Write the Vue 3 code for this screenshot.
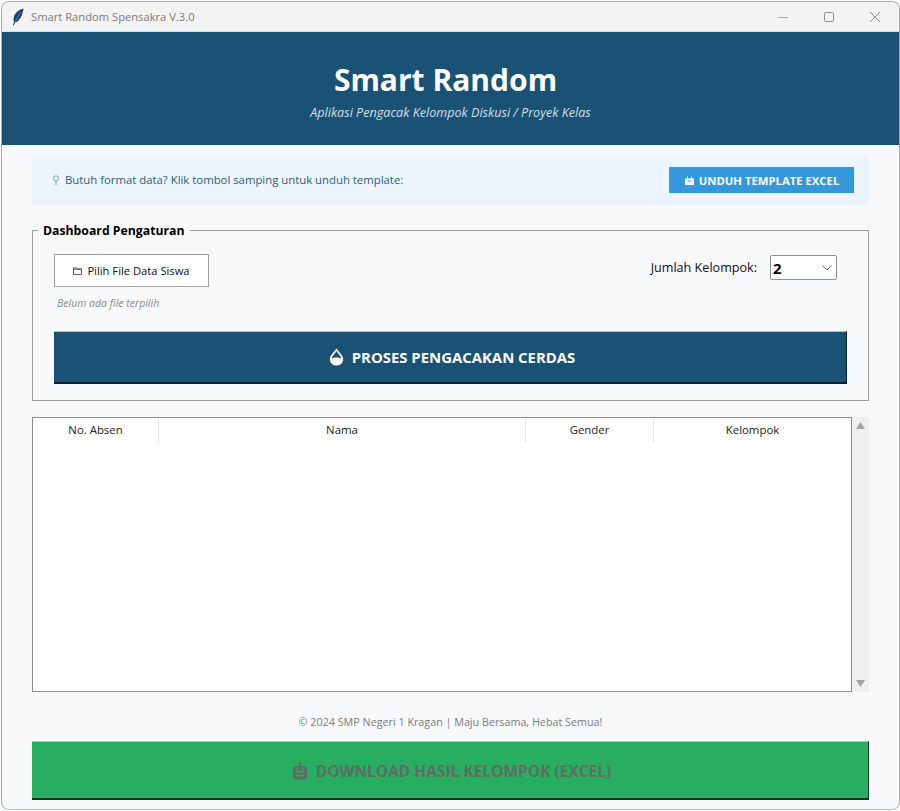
<script setup>
const columns = [
  { label: 'No. Absen', width: 126 },
  { label: 'Nama', width: 367 },
  { label: 'Gender', width: 128 },
  { label: 'Kelompok', width: 197 },
]
</script>

<template>
  <div class="window">
    <div class="titlebar">
      <svg class="feather" width="14" height="18" viewBox="0 0 14 18">
        <path d="M12.500 .8C8 1.200 3.600 5 2.600 10.200 2.300 12 2.600 13.200 3.200 14L1.800 17l1 .4 1.200-2.900C8.500 13.800 11.500 7.500 12.500 .8Z" fill="#1f3f68" />
        <path d="M10.500 3.500C8 6.500 5.800 10 4.300 13.800" stroke="#7fa6cf" stroke-width=".7" fill="none" />
      </svg>
      <span class="wintitle">Smart Random Spensakra V.3.0</span>
      <div class="controls">
        <svg width="12" height="12" viewBox="0 0 12 12"><path d="M1 6.500h10" stroke="#a6a6a6" stroke-width="1.200" /></svg>
        <svg width="12" height="12" viewBox="0 0 12 12"><rect x="1.500" y="1.500" width="9" height="9" rx="1.200" fill="none" stroke="#8e8e8e" /></svg>
        <svg width="12" height="12" viewBox="0 0 12 12"><path d="M1 1l10 10M11 1L1 11" stroke="#8e8e8e" /></svg>
      </div>
    </div>

    <header class="hero">
      <h1>Smart Random</h1>
      <p>Aplikasi Pengacak Kelompok Diskusi / Proyek Kelas</p>
    </header>

    <main class="content">
      <div class="info">
        <span class="info-text">
          <svg width="8" height="10" viewBox="0 0 8 10"><circle cx="4" cy="3.500" r="2.600" fill="none" stroke="#7f9fb4" /><path d="M2.800 7.500h2.400M3.200 9.200h1.600" stroke="#7f9fb4" /></svg>
          Butuh format data? Klik tombol samping untuk unduh template:
        </span>
        <button class="template">
          <svg width="11" height="11" viewBox="0 0 11 11"><path d="M1 3.500h2V1.500h1v2h3V1.500h1v2h2V10H1Z" fill="#fff" /><path d="M3.500 6h4" stroke="#3498db" /></svg>
          UNDUH TEMPLATE EXCEL
        </button>
      </div>

      <fieldset class="panel">
        <legend>Dashboard Pengaturan</legend>
        <div class="controls-row">
          <div class="file-col">
            <button class="file">
              <svg width="9" height="8" viewBox="0 0 10 9"><path d="M.5 2V1h3.500l1 1.200h4.500V8.500H.5ZM.5 2.500h9" fill="none" stroke="#333" stroke-width=".9" /></svg>
              Pilih File Data Siswa
            </button>
            <div class="nofile">Belum ada file terpilih</div>
          </div>
          <div class="count">
            <span>Jumlah Kelompok:</span>
            <div class="select">
              <b>2</b>
              <svg width="10" height="6" viewBox="0 0 10 6"><path d="M.5 .5L5 5 9.500 .5" fill="none" stroke="#777" /></svg>
            </div>
          </div>
        </div>
        <button class="process">
          <svg width="15" height="18" viewBox="0 0 15 18">
            <path d="M7.500 .5C5.500 4 .8 7 .8 11.300a6.700 6.300 0 0 0 13.400 0C14.200 7 9.500 4 7.500 .5Z" fill="#fff" />
            <path d="M7.500 3C6 5.500 3 8 2.600 11c1.800-2 8-2 9.800 0C12 8 9 5.500 7.500 3Z" fill="#1a5276" />
          </svg>
          PROSES PENGACAKAN CERDAS
        </button>
      </fieldset>

      <div class="table-wrap">
        <div class="table">
          <div class="thead">
            <div v-for="c in columns" :key="c.label" class="th" :style="{ width: c.width + 'px' }">{{ c.label }}</div>
          </div>
        </div>
        <div class="scroll">
          <svg width="9" height="7" viewBox="0 0 9 7"><path d="M4.500 0L9 7H0Z" fill="#a3a3a3" /></svg>
          <svg width="9" height="7" viewBox="0 0 9 7"><path d="M0 0h9L4.500 7Z" fill="#a3a3a3" /></svg>
        </div>
      </div>

      <footer class="copy">© 2024 SMP Negeri 1 Kragan | Maju Bersama, Hebat Semua!</footer>

      <button class="download">
        <svg width="16" height="18" viewBox="0 0 16 18">
          <path d="M3.500 4h9A2.500 2.500 0 0 1 15 6.500V15a2.500 2.500 0 0 1-2.500 2.500h-9A2.500 2.500 0 0 1 1 15V6.500A2.500 2.500 0 0 1 3.500 4Z" fill="#5d6d63" />
          <path d="M8 .5v8" stroke="#5d6d63" stroke-width="2.400" fill="none" />
          <path d="M5 5.500v4.500h6V5.500M4 13.500h8" stroke="#27ae60" stroke-width="1.300" fill="none" />
        </svg>
        DOWNLOAD HASIL KELOMPOK (EXCEL)
      </button>
    </main>
  </div>
</template>

<style>
html, body { background: #fff; }
</style>

<style scoped>
.window {
  box-sizing: border-box;
  width: 899px;
  height: 809px;
  margin: 1px 0 0 1px;
  border: 1px solid #a9a9a9;
  border-bottom-color: #bdbdbd;
  border-radius: 8px;
  overflow: hidden;
  background: #f8f9fb;
  font-family: "Open Sans", "Noto Sans", sans-serif;
  color: #111;
}
.titlebar {
  height: 30px;
  box-sizing: border-box;
  background: #f3f3f3;
  display: flex;
  align-items: center;
  padding-left: 9px;
  border-bottom: 1px solid #d5e0e8;
}
.feather { margin-right: 6px; }
.wintitle { font-size: 11.200px; color: #7a7a7a; }
.controls {
  margin-left: auto;
  display: flex;
  gap: 34px;
  padding-right: 18px;
  align-items: center;
}
.hero {
  height: 113px;
  box-sizing: border-box;
  background: #1a5276;
  color: #fff;
  text-align: center;
  padding-top: 27px;
}
.hero h1 {
  margin: 0;
  padding-right: 10px;
  font-size: 30px;
  line-height: 42px;
  font-weight: 700;
}
.hero p {
  margin: 3px 0 0;
  font-size: 12.600px;
  line-height: 18px;
  font-style: italic;
  color: #d6dfe6;
}
.content {
  padding: 11px 30px 0 30px;
  display: flex;
  flex-direction: column;
}
.info {
  height: 49px;
  box-sizing: border-box;
  background: #ebf5fb;
  display: flex;
  align-items: center;
  justify-content: space-between;
  padding: 0 15px 1px 20px;
}
.info-text {
  font-size: 11.350px;
  line-height: 14px;
  margin-top: -1px;
  color: #2a6186;
  display: flex;
  align-items: center;
  gap: 5px;
}
button {
  font-family: inherit;
  border: none;
  padding: 0;
  display: flex;
  align-items: center;
  justify-content: center;
}
.template {
  width: 185px;
  height: 26px;
  gap: 4px;
  background: #3498db;
  color: #fff;
  font-size: 11.300px;
  font-weight: 700;
}
.panel {
  margin: 17px 0 0;
  height: 179px;
  box-sizing: border-box;
  border: 1px solid #9d9d9d;
  padding: 15px 21px 0 21px;
  min-width: 0;
}
legend {
  margin-left: -16px;
  padding: 0 5px;
  font-size: 12.250px;
  font-weight: 700;
  line-height: 17px;
  color: #000;
}
.controls-row {
  display: flex;
  justify-content: space-between;
  height: 77px;
}
.file {
  box-sizing: border-box;
  width: 155px;
  height: 33px;
  gap: 5px;
  background: #fff;
  border: 1px solid #9f9f9f;
  font-size: 11.200px;
  color: #111;
}
.nofile {
  margin: 9px 0 0 3px;
  font-size: 10.500px;
  font-style: italic;
  color: #8a8a8a;
}
.count {
  display: flex;
  align-items: flex-start;
  gap: 13px;
  font-size: 12.600px;
  padding-right: 10px;
  line-height: 28px;
}
.select {
  box-sizing: border-box;
  width: 67px;
  height: 25px;
  margin-top: 1px;
  background: #fff;
  border: 1px solid #8f8f8f;
  border-radius: 2px;
  display: flex;
  align-items: center;
  justify-content: space-between;
  padding: 0 4px 0 2px;
  font-size: 15px;
  color: #000;
}
.process {
  box-sizing: border-box;
  width: 793px;
  height: 53px;
  gap: 8px;
  padding-left: 4px;
  background: #1a5276;
  border-top: 1px solid #a9c0cf;
  border-bottom: 2px solid #0b1d29;
  border-right: 1px solid #0b1d29;
  color: #fff;
  font-size: 14.900px;
  font-weight: 700;
}
.table-wrap {
  display: flex;
  margin-top: 16px;
  height: 275px;
  width: 837px;
}
.table {
  box-sizing: border-box;
  width: 820px;
  background: #fff;
  border: 1px solid #8c8c8c;
}
.thead { display: flex; height: 24px; }
.th {
  box-sizing: border-box;
  text-align: center;
  font-size: 11.400px;
  line-height: 23px;
  color: #222;
  border-right: 1px solid #e6e6e6;
}
.th:last-child { border-right: none; }
.scroll {
  width: 17px;
  background: #efefef;
  display: flex;
  flex-direction: column;
  justify-content: space-between;
  align-items: center;
  padding: 5px 0;
  box-sizing: border-box;
}
.copy {
  text-align: center;
  font-size: 10.750px;
  line-height: 16px;
  color: #7c7c7c;
  margin-top: 22px;
  width: 837px;
}
.download {
  box-sizing: border-box;
  width: 837px;
  height: 59px;
  margin-top: 11px;
  gap: 8px;
  padding-top: 2px;
  padding-left: 3px;
  background: #27ae60;
  border-top: 1px solid #8be0ae;
  border-bottom: 2px solid #0f3a21;
  border-right: 1px solid #0f3a21;
  color: #5d6d63;
  font-size: 15.500px;
  font-weight: 700;
}
</style>
